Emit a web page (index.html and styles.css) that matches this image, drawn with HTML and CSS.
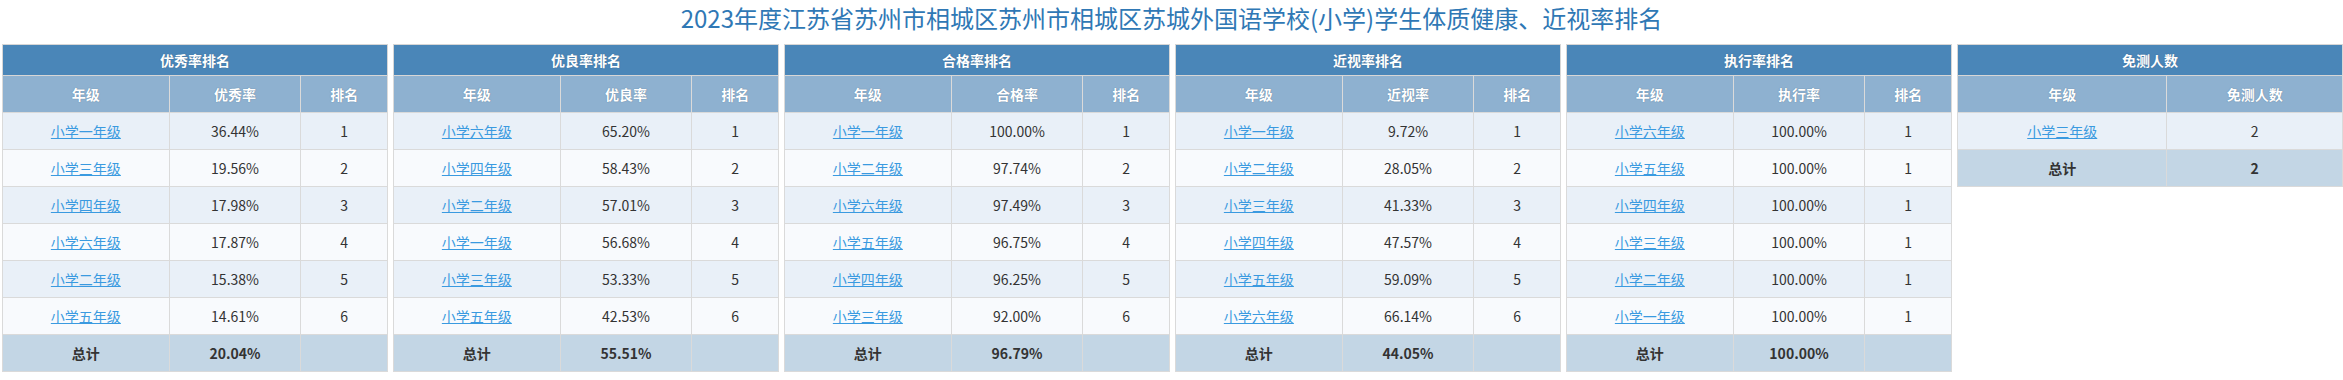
FILE: index.html
```html
<!DOCTYPE html>
<html lang="zh-CN">
<head>
<meta charset="utf-8">
<title>体质健康、近视率排名</title>
<link rel="stylesheet" href="styles.css">
</head>
<body>
<h1 class="title">2023年度江苏省苏州市相城区苏州市相城区苏城外国语学校(小学)学生体质健康、近视率排名</h1>
<div class="boards">
  <table class="rank">
    <colgroup><col class="c1"><col class="c2"><col class="c3"></colgroup>
    <thead>
      <tr class="h1"><th colspan="3">优秀率排名</th></tr>
      <tr class="h2"><th>年级</th><th>优秀率</th><th>排名</th></tr>
    </thead>
    <tbody>
      <tr><td><a href="#">小学一年级</a></td><td>36.44%</td><td>1</td></tr>
      <tr><td><a href="#">小学三年级</a></td><td>19.56%</td><td>2</td></tr>
      <tr><td><a href="#">小学四年级</a></td><td>17.98%</td><td>3</td></tr>
      <tr><td><a href="#">小学六年级</a></td><td>17.87%</td><td>4</td></tr>
      <tr><td><a href="#">小学二年级</a></td><td>15.38%</td><td>5</td></tr>
      <tr><td><a href="#">小学五年级</a></td><td>14.61%</td><td>6</td></tr>
      <tr class="total"><td>总计</td><td>20.04%</td><td></td></tr>
    </tbody>
  </table>
  <table class="rank">
    <colgroup><col class="c1"><col class="c2"><col class="c3"></colgroup>
    <thead>
      <tr class="h1"><th colspan="3">优良率排名</th></tr>
      <tr class="h2"><th>年级</th><th>优良率</th><th>排名</th></tr>
    </thead>
    <tbody>
      <tr><td><a href="#">小学六年级</a></td><td>65.20%</td><td>1</td></tr>
      <tr><td><a href="#">小学四年级</a></td><td>58.43%</td><td>2</td></tr>
      <tr><td><a href="#">小学二年级</a></td><td>57.01%</td><td>3</td></tr>
      <tr><td><a href="#">小学一年级</a></td><td>56.68%</td><td>4</td></tr>
      <tr><td><a href="#">小学三年级</a></td><td>53.33%</td><td>5</td></tr>
      <tr><td><a href="#">小学五年级</a></td><td>42.53%</td><td>6</td></tr>
      <tr class="total"><td>总计</td><td>55.51%</td><td></td></tr>
    </tbody>
  </table>
  <table class="rank">
    <colgroup><col class="c1"><col class="c2"><col class="c3"></colgroup>
    <thead>
      <tr class="h1"><th colspan="3">合格率排名</th></tr>
      <tr class="h2"><th>年级</th><th>合格率</th><th>排名</th></tr>
    </thead>
    <tbody>
      <tr><td><a href="#">小学一年级</a></td><td>100.00%</td><td>1</td></tr>
      <tr><td><a href="#">小学二年级</a></td><td>97.74%</td><td>2</td></tr>
      <tr><td><a href="#">小学六年级</a></td><td>97.49%</td><td>3</td></tr>
      <tr><td><a href="#">小学五年级</a></td><td>96.75%</td><td>4</td></tr>
      <tr><td><a href="#">小学四年级</a></td><td>96.25%</td><td>5</td></tr>
      <tr><td><a href="#">小学三年级</a></td><td>92.00%</td><td>6</td></tr>
      <tr class="total"><td>总计</td><td>96.79%</td><td></td></tr>
    </tbody>
  </table>
  <table class="rank">
    <colgroup><col class="c1"><col class="c2"><col class="c3"></colgroup>
    <thead>
      <tr class="h1"><th colspan="3">近视率排名</th></tr>
      <tr class="h2"><th>年级</th><th>近视率</th><th>排名</th></tr>
    </thead>
    <tbody>
      <tr><td><a href="#">小学一年级</a></td><td>9.72%</td><td>1</td></tr>
      <tr><td><a href="#">小学二年级</a></td><td>28.05%</td><td>2</td></tr>
      <tr><td><a href="#">小学三年级</a></td><td>41.33%</td><td>3</td></tr>
      <tr><td><a href="#">小学四年级</a></td><td>47.57%</td><td>4</td></tr>
      <tr><td><a href="#">小学五年级</a></td><td>59.09%</td><td>5</td></tr>
      <tr><td><a href="#">小学六年级</a></td><td>66.14%</td><td>6</td></tr>
      <tr class="total"><td>总计</td><td>44.05%</td><td></td></tr>
    </tbody>
  </table>
  <table class="rank">
    <colgroup><col class="c1"><col class="c2"><col class="c3"></colgroup>
    <thead>
      <tr class="h1"><th colspan="3">执行率排名</th></tr>
      <tr class="h2"><th>年级</th><th>执行率</th><th>排名</th></tr>
    </thead>
    <tbody>
      <tr><td><a href="#">小学六年级</a></td><td>100.00%</td><td>1</td></tr>
      <tr><td><a href="#">小学五年级</a></td><td>100.00%</td><td>1</td></tr>
      <tr><td><a href="#">小学四年级</a></td><td>100.00%</td><td>1</td></tr>
      <tr><td><a href="#">小学三年级</a></td><td>100.00%</td><td>1</td></tr>
      <tr><td><a href="#">小学二年级</a></td><td>100.00%</td><td>1</td></tr>
      <tr><td><a href="#">小学一年级</a></td><td>100.00%</td><td>1</td></tr>
      <tr class="total"><td>总计</td><td>100.00%</td><td></td></tr>
    </tbody>
  </table>
  <table class="rank">
    <colgroup><col class="d1"><col class="d2"></colgroup>
    <thead>
      <tr class="h1"><th colspan="2">免测人数</th></tr>
      <tr class="h2"><th>年级</th><th>免测人数</th></tr>
    </thead>
    <tbody>
      <tr><td><a href="#">小学三年级</a></td><td>2</td></tr>
      <tr class="total"><td>总计</td><td>2</td></tr>
    </tbody>
  </table>
</div>
</body>
</html>
```

FILE: styles.css
```css
html, body {
  margin: 0;
  padding: 0;
  background: #ffffff;
}
body {
  font-family: "Noto Sans CJK SC", "Microsoft YaHei", sans-serif;
  color: #333333;
  font-size: 14px;
}
.title {
  margin: 0 0 8px 0;
  font-size: 24px;
  line-height: 36px;
  font-weight: normal;
  text-align: center;
  color: #2f78b5;
}
.boards {
  display: flex;
  align-items: flex-start;
  gap: 5px;
  padding-left: 2px;
}
.rank {
  flex: 1 1 0;
  width: 386px;
  border-collapse: collapse;
  table-layout: fixed;
  border: 1px solid #d6d6d6;
}
.c1 { width: 43.3%; }
.c2 { width: 34.2%; }
.c3 { width: 22.5%; }
.d1 { width: 54.4%; }
.d2 { width: 45.6%; }
.rank th, .rank td {
  padding: 0;
  text-align: center;
  border: 1px solid #dadada;
  font-size: 14px;
  line-height: 20px;
}
.rank th {
  color: #ffffff;
  font-weight: bold;
  text-shadow: 0 0 1px rgba(40, 70, 100, 0.6);
}
.h1 th {
  height: 30px;
  background: #4a86b8;
  border-color: #d6d6d6;
}
.h2 th {
  height: 36px;
  background: #8eb1d0;
}
.rank td {
  height: 36px;
}
.rank tbody tr:nth-child(odd) td {
  background: #e9f0f8;
}
.rank tbody tr:nth-child(even) td {
  background: #f8fafd;
}
.rank tbody tr.total td {
  background: #c3d6e5;
  font-weight: bold;
}
.rank a {
  color: #3a9ae0;
  text-decoration: underline;
}
```
